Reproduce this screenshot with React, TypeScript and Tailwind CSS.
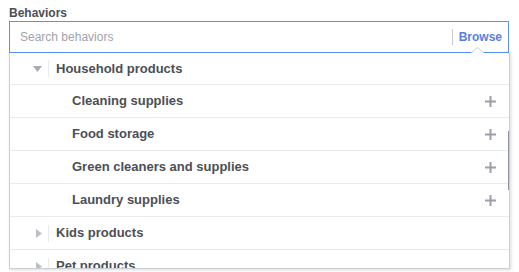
import React from 'react';

type Row = { label: string; level: 0 | 1; state?: 'open' | 'closed' };

const rows: Row[] = [
  { label: 'Household products', level: 0, state: 'open' },
  { label: 'Cleaning supplies', level: 1 },
  { label: 'Food storage', level: 1 },
  { label: 'Green cleaners and supplies', level: 1 },
  { label: 'Laundry supplies', level: 1 },
  { label: 'Kids products', level: 0, state: 'closed' },
  { label: 'Pet products', level: 0, state: 'closed' },
];

function Plus() {
  return (
    <svg width="11" height="11" viewBox="0 0 11 11" className="text-[#9ba0a8]">
      <path d="M5.5 0v11M0 5.5h11" stroke="currentColor" strokeWidth="2" />
    </svg>
  );
}

function Triangle({ open }: { open: boolean }) {
  return open ? (
    <svg width="9" height="6" viewBox="0 0 9 6">
      <path d="M0 0h9L4.5 6z" fill="#a7abb2" />
    </svg>
  ) : (
    <svg width="6" height="9" viewBox="0 0 6 9">
      <path d="M0 0l6 4.5L0 9z" fill="#bcc0c6" />
    </svg>
  );
}

function TreeRow({ row, first }: { row: Row; first: boolean }) {
  return (
    <div
      className={`flex items-center border-b border-[#e9ebee] ${first ? 'h-[32px]' : 'h-[33px]'}`}
    >
      {row.level === 0 ? (
        <>
          <div className="w-[38px] flex justify-end pr-[6px]">
            <Triangle open={row.state === 'open'} />
          </div>
          <div className="w-px h-[17px] bg-[#e9ebee]" />
          <span className="pl-[7px] text-[13px] font-bold text-[#4b4f56]">{row.label}</span>
        </>
      ) : (
        <>
          <span className="pl-[62px] flex-1 text-[13px] font-bold text-[#4b4f56]">{row.label}</span>
          <div className="pr-[13px] flex items-center">
            <Plus />
          </div>
        </>
      )}
    </div>
  );
}

export default function App() {
  return (
    <div className="w-[519px] h-[272px] bg-white overflow-hidden pl-[9px] pt-[6px] font-['Liberation_Sans',Arial,sans-serif]">
      <div className="h-[15px] leading-[15px] text-[12px] font-bold text-[#4b4f56]">Behaviors</div>

      {/* Search input */}
      <div className="relative w-[500px] h-[32px] border border-[#5890ff] flex items-center">
        <span className="flex-1 pl-[10px] text-[12px] text-[#a0a4ab]">Search behaviors</span>
        <div className="w-px h-[16px] bg-[#c4cad6]" />
        <span className="pl-[6px] pr-[6px] text-[12px] font-bold text-[#5b7fe0]">Browse</span>
        <svg
          width="13"
          height="6"
          viewBox="0 0 13 6"
          className="absolute right-[24px] bottom-[-1px]"
        >
          <path d="M0 6L6.5 0.5L13 6" fill="#fff" stroke="#ccd0d5" strokeWidth="1" />
        </svg>
      </div>

      {/* Dropdown panel */}
      <div className="relative w-[501px] h-[216px] border-x border-b border-[#ccd0d5] bg-white shadow-[1px_1px_3px_rgba(0,0,0,0.15)] overflow-hidden">
        {rows.map((row, i) => (
          <TreeRow key={row.label} row={row} first={i === 0} />
        ))}
        <div className="absolute right-0 top-[78px] w-px h-[59px] bg-[#8d9199]" />
      </div>
    </div>
  );
}
